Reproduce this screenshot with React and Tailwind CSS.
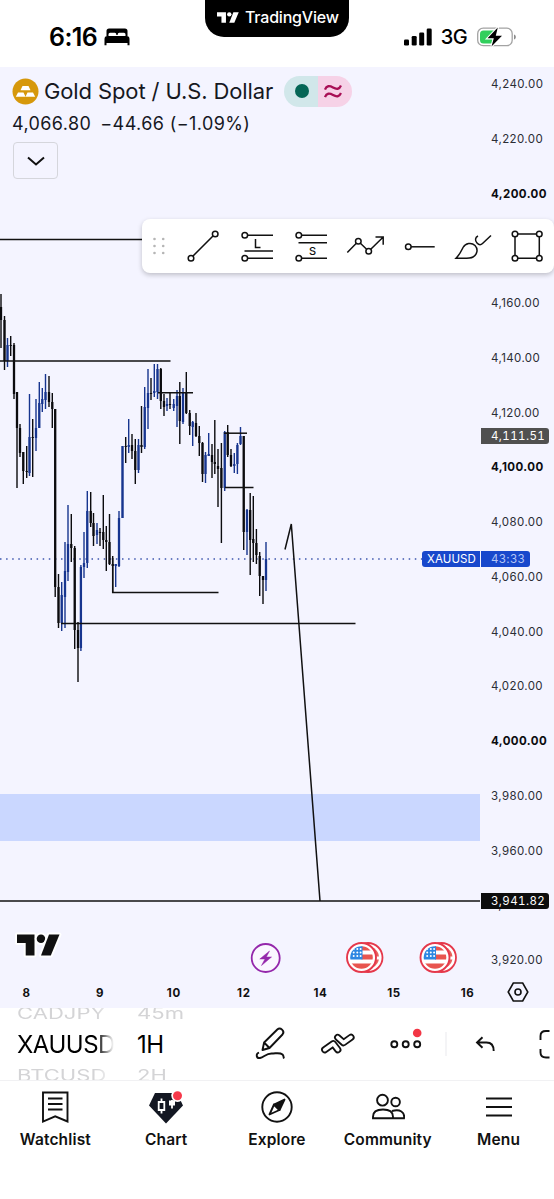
import React from "react";

const UP = "#17358f";
const DOWN = "#0b0b0e";

// [x, high, low, bodyTop, bodyBottom, isUp]
const candles = [
  [1, 294, 348, 307, 320, 0],
  [4.5, 316, 370, 320, 361, 0],
  [7.5, 338, 367, 345, 361, 1],
  [10.7, 336, 356, 345, 346, 0],
  [14, 343, 399, 345, 394, 0],
  [17, 392, 488, 392, 428, 0],
  [20, 424, 457, 428, 453, 0],
  [23.3, 452, 484, 452, 471, 0],
  [26.7, 446, 478, 471, 472, 0],
  [29.5, 394, 476, 437, 473, 1],
  [32.7, 419, 477, 437, 438, 0],
  [36, 399, 451, 428, 438, 1],
  [39.3, 382, 428, 403, 428, 1],
  [42.3, 388, 412, 399, 404, 1],
  [45.5, 374, 409, 392, 400, 1],
  [49, 376, 407, 392, 402, 0],
  [52.3, 393, 428, 402, 409, 0],
  [55.2, 409, 597, 409, 587, 0],
  [58.5, 574, 628, 587, 623, 0],
  [61.7, 582, 631, 595, 623, 1],
  [65, 542, 628, 571, 597, 1],
  [68, 505, 581, 544, 572, 1],
  [71.3, 514, 562, 544, 548, 0],
  [74.7, 546, 649, 548, 630, 0],
  [78, 622, 682, 630, 648, 0],
  [80.9, 565, 651, 567, 648, 1],
  [84, 532, 578, 563, 567, 1],
  [87.3, 491, 568, 511, 563, 1],
  [90.7, 492, 527, 511, 523, 0],
  [93.5, 513, 546, 523, 536, 0],
  [97, 523, 544, 530, 535, 1],
  [100, 528, 546, 532, 533, 0],
  [103.3, 495, 549, 532, 540, 0],
  [106.3, 526, 571, 540, 542, 0],
  [109.5, 514, 565, 542, 564, 0],
  [112.7, 556, 593, 564, 566, 0],
  [115.7, 564, 587, 564, 566, 1],
  [119, 511, 567, 518, 566, 1],
  [122.5, 446, 518, 446, 518, 1],
  [125.7, 437, 463, 446, 447, 0],
  [128.7, 419, 453, 445, 447, 1],
  [132, 434, 459, 445, 451, 0],
  [135.3, 439, 484, 451, 470, 0],
  [138.5, 439, 473, 445, 470, 1],
  [141.5, 406, 453, 445, 447, 0],
  [144.7, 387, 449, 407, 447, 1],
  [148, 369, 429, 393, 408, 1],
  [151, 378, 400, 393, 394, 0],
  [154.3, 364, 397, 391, 393, 1],
  [157.5, 364, 399, 369, 392, 1],
  [160.8, 368, 409, 369, 401, 0],
  [164, 394, 416, 401, 407, 0],
  [167, 398, 411, 404, 406, 1],
  [170, 393, 409, 404, 405, 0],
  [173.7, 399, 411, 404, 408, 1],
  [177, 390, 427, 396, 406, 1],
  [179.8, 382, 444, 396, 421, 0],
  [183, 388, 424, 392, 422, 1],
  [186.3, 372, 414, 393, 413, 0],
  [189.7, 410, 435, 413, 426, 0],
  [192.7, 421, 446, 422, 427, 1],
  [196, 413, 437, 423, 436, 0],
  [199.3, 426, 456, 436, 443, 0],
  [202.5, 442, 482, 443, 474, 0],
  [205.5, 452, 483, 455, 474, 1],
  [208.7, 433, 456, 454, 456, 1],
  [212, 444, 478, 455, 462, 0],
  [214.8, 420, 474, 462, 464, 0],
  [218, 449, 507, 466, 469, 0],
  [221.4, 443, 543, 468, 488, 0],
  [224.7, 431, 491, 432, 488, 1],
  [227.7, 425, 457, 432, 455, 0],
  [231, 449, 467, 455, 466, 0],
  [234.3, 453, 473, 464, 466, 1],
  [237.4, 443, 474, 445, 464, 1],
  [240.5, 427, 445, 436, 444, 1],
  [243.7, 436, 550, 436, 532, 0],
  [247, 509, 555, 510, 532, 1],
  [250.2, 493, 575, 510, 540, 0],
  [253.3, 496, 562, 539, 543, 0],
  [256.4, 529, 564, 543, 555, 0],
  [259.7, 552, 596, 556, 576, 0],
  [263, 576, 604, 576, 580, 0],
  [266, 542, 591, 559, 580, 1],
];

const levels = [
  [0, 239.5, 150],
  [0, 361, 170.5],
  [158, 392.8, 193],
  [224, 433.2, 247],
  [225, 487.5, 253.5],
  [112, 592.5, 218.5],
  [61, 623.5, 355.5],
  [0, 901, 480],
];

const prices = [
  "4,240.00", "4,220.00", "4,200.00", "4,180.00", "4,160.00", "4,140.00",
  "4,120.00", "4,100.00", "4,080.00", "4,060.00", "4,040.00", "4,020.00",
  "4,000.00", "3,980.00", "3,960.00", "3,940.00", "3,920.00",
];
const majorPrices = ["4,200.00", "4,100.00", "4,000.00"];

const days = [
  [26.5, "8"],
  [100, "9"],
  [173.8, "10"],
  [243.8, "12"],
  [320.5, "14"],
  [394, "15"],
  [467.5, "16"],
];

const TVLogo = ({ className }) => (
  <svg viewBox="0 0 43 21" className={className} fill="currentColor">
    <path d="M0 0h17.5v21H8.7V8.6H0z" />
    <circle cx="24" cy="4.3" r="4.3" />
    <path d="M32 0h10.5L33.8 21H24z" />
  </svg>
);

const StatusBar = () => (
  <header className="relative flex h-[67px] shrink-0 items-center justify-between bg-white pl-[49px] pr-[37px] pt-[7px] text-black">
    <div className="flex items-center gap-[7px]">
      <span className="text-[25px] font-semibold leading-none tracking-[-0.6px]">6:16</span>
      <svg width="26" height="18" viewBox="0 0 26 18">
        <path d="M2.5 8V3A2.6 2.6 0 0 1 5.100.4h15.800A2.600 2.600 0 0 1 23.500 3v5h-2V6.200A1.500 1.500 0 0 0 20 4.700h-4.800a1.500 1.500 0 0 0-1.500 1.500V7h-1.400v-.8a1.500 1.500 0 0 0-1.500-1.500H6a1.500 1.500 0 0 0-1.500 1.500V8z" />
        <path d="M3.500 8h19a3 3 0 0 1 3 3v6.200h-2V15h-21v2.200h-2V11a3 3 0 0 1 3-3z" />
      </svg>
    </div>
    <div className="flex items-center">
      <svg width="28" height="18" viewBox="0 0 28 18">
        <rect x="0" y="11.5" width="5" height="6" rx="1.3" />
        <rect x="7.7" y="8" width="5" height="9.5" rx="1.3" />
        <rect x="15.2" y="4.5" width="5" height="13" rx="1.3" />
        <rect x="22.7" y="0.5" width="5" height="17" rx="1.3" />
      </svg>
      <span className="ml-[9px] text-[20px] font-medium leading-none tracking-[-0.6px]">3G</span>
      <svg className="ml-[10px]" width="40" height="22" viewBox="0 0 40 22">
        <rect x="0.7" y="2.2" width="34.5" height="17.5" rx="5.5" fill="#fff" stroke="#a3a3a3" strokeWidth="1.3" />
        <path d="M6.5 4.5H17v13H6.500A3.500 3.500 0 0 1 3 14V8a3.500 3.500 0 0 1 3.500-3.500z" fill="#31cf5c" />
        <path d="M37 8.500c1.500.5 1.800 1.500 1.800 2.500s-.3 2-1.800 2.500z" fill="#8c8c8c" />
        <path d="M20.800 1.500 10.500 12.300h6.300l-2.300 8.200L25 9.700h-6.200z" stroke="#fff" strokeWidth="2.2" paintOrder="stroke" />
      </svg>
    </div>
    <div className="absolute left-[205px] top-0 flex h-[37px] w-[144px] items-center rounded-b-[19px] bg-black pb-[3px] pl-[12px] text-white">
      <TVLogo className="h-[11px] w-[22px]" />
      <span className="ml-[6px] text-[16px] font-medium leading-none tracking-[-0.2px]">TradingView</span>
    </div>
  </header>
);

const FlagBadge = ({ x }) => (
  <g transform={`translate(${x} 957.5)`}>
    <circle cx="6.5" r="14.5" fill="#fff" stroke="#e5384b" strokeWidth="1.8" />
    <circle cx="6.5" r="11" fill="#e8635d" />
    <path d="M12-1h6v3h-6z" fill="#fff" />
    <circle r="14.5" fill="#fff" stroke="#e5384b" strokeWidth="1.9" />
    <g clipPath="url(#flagClip)">
      <rect x="-12" y="-12" width="24" height="24" fill="#fff" />
      <path d="M0-12h12v5H0zM0-3h12v5H0zM-12 6h24v6h-24z" fill="#e8554f" />
      <rect x="-12" y="-12" width="13" height="14" fill="#2d87e2" />
      {[-8.5, -5, -1.5].map((y) =>
        [-7.8, -4.2, -0.9].map((sx) => (
          <circle key={`${sx}${y}`} cx={sx} cy={y} r="1" fill="#fff" />
        ))
      )}
    </g>
  </g>
);

const Chart = () => (
  <svg width="480" height="913" viewBox="0 67 480 913" className="shrink-0">
    <defs>
      <clipPath id="flagClip">
        <circle r="11.3" />
      </clipPath>
    </defs>

    {/* Demand zone */}
    <rect x="0" y="794" width="480" height="47" fill="#cad7ff" />

    {/* Current price */}
    <path d="M0 559H422" stroke="#3c55ad" strokeWidth="1.5" strokeDasharray="1.5 4.6" />

    {candles.map(([x, high, low, top, bottom, up]) => (
      <g key={x} fill={up ? UP : DOWN}>
        <rect x={x - 0.7} y={high} width="1.4" height={low - high} />
        <rect x={x - 1.15} y={top} width="2.3" height={bottom - top} />
      </g>
    ))}

    {/* Drawn levels */}
    {levels.map(([x1, y, x2]) => (
      <path key={y} d={`M${x1} ${y}H${x2}`} stroke="#111" strokeWidth="1.5" />
    ))}
    <path d="M112.7 558V593" stroke="#111" strokeWidth="1.5" />
    <path d="M285 549.5 291.3 524 320 901" fill="none" stroke="#111" strokeWidth="1.5" />

    <g transform="translate(17 934.5)" stroke="#fff" strokeWidth="4" strokeLinejoin="round" fill="#111" paintOrder="stroke">
      <path d="M0 0h17.5v21H8.700V8.600H0z" />
      <circle cx="24" cy="4.3" r="4.3" />
      <path d="M32 0h10.500L33.800 21H24z" />
    </g>

    {/* Events */}
    <circle cx="265.700" cy="958" r="14" fill="#faf7ff" stroke="#9427ab" strokeWidth="1.8" />
    <path d="M269.500 951l-9.700 8h5.200l-3.500 6.500 10-8.500h-5.200z" fill="#9427ab" stroke="#9427ab" strokeWidth="0.5" />
    <FlagBadge x={361.5} />
    <FlagBadge x={435} />
  </svg>
);

const Legend = () => (
  <div className="absolute left-[12px] top-[8px] text-[#16181f]">
    <div className="flex h-8 items-center">
      <svg width="27" height="27" viewBox="0 0 27 27">
        <circle cx="13.5" cy="13.5" r="13" fill="#d6980b" />
        <path d="M10.500 8h6l2 4.200h-10zM6 14.500h5.500l2 4.300H3.800zM15.500 14.500H21l2.200 4.300h-9.700z" fill="#fff" />
      </svg>
      <span className="ml-[5px] whitespace-nowrap text-[22px] leading-none tracking-[-0.12px]">Gold Spot / U.S. Dollar</span>
      <div className="ml-[11px] flex h-[31px] w-[68px] overflow-hidden rounded-full">
        <div className="flex w-1/2 items-center justify-center bg-[#d1e7ea]">
          <span className="ml-0.5 size-[14px] rounded-full bg-[#056656]" />
        </div>
        <div className="flex w-1/2 items-center justify-center bg-[#f6d2e7] pr-1">
          <svg width="18" height="15" viewBox="0 0 18 15" fill="none" stroke="#a80f55" strokeWidth="2.3">
            <path d="M1 5.500C2.500 1.500 5.500 1.500 9 3.500s6.500 2 8-2M1 13C2.500 9 5.500 9 9 11s6.500 2 8-2" />
          </svg>
        </div>
      </div>
    </div>
    <div className="mt-[7px] flex gap-[9px] whitespace-nowrap text-[18px] leading-5 tracking-[0.4px]">
      <span>4,066.80</span>
      <span>−44.66 (−1.09%)</span>
    </div>
    <button className="ml-[1px] mt-[8px] flex h-[37px] w-[45px] items-center justify-center rounded-[4px] border border-[#d5d6dc]">
      <svg width="18" height="10" viewBox="0 0 18 10" fill="none" stroke="#111" strokeWidth="2">
        <path d="m1 1.500 8 7 8-7" />
      </svg>
    </button>
  </div>
);

const Dot = ({ x, y }) => <circle cx={x} cy={y} r="2.8" fill="#fff" />;

const tools = [
  <>
    <path d="M6 30 30 6" />
    <Dot x="6" y="30.2" />
    <Dot x="30.2" y="6" />
  </>,
  <>
    <path d="M6 7.200H34M5.500 23H34M6 30.200H34M16.500 11v8.500h5" />
    <Dot x="5.8" y="7.2" />
    <Dot x="5.8" y="30.2" />
  </>,
  <>
    <path d="M6 7.200H34M5.500 14.700H34M6 30.200H34" />
    <Dot x="5.8" y="7.2" />
    <Dot x="5.8" y="30.2" />
    <text x="19.5" y="26.5" textAnchor="middle" className="fill-[#111] stroke-none text-[11px] font-medium">S</text>
  </>,
  <>
    <path d="M.3 24.500 11.300 13.200l10.400 10L36 9.200M28.500 9h7.700v7.700" />
    <Dot x="11.3" y="13.2" />
    <Dot x="21.7" y="23.2" />
  </>,
  <>
    <path d="M7 18.800H33.700" />
    <Dot x="7.3" y="18.8" />
  </>,
  <>
    <path d="M1 30.300C5 26 6.500 22.500 8 19.500c2.500-4.500 8.500-5.500 12-2 3.300 3.500 2.500 9-2 11.500-3.500 2-9 1.200-17 1.300z" />
    <path d="M23 8c-3 1.500-3.200 4.500-1 7s4 2 5.500.5L36 7.500" />
  </>,
  <>
    <path d="M6 6h24.300v24.200H6z" />
    <Dot x="6" y="6" />
    <Dot x="30.3" y="6" />
    <Dot x="6" y="30.2" />
    <Dot x="30.3" y="30.2" />
  </>,
];

const DrawingToolbar = () => (
  <div className="absolute left-[142px] top-[152px] flex h-[54px] w-[412px] items-center rounded-[8px] bg-white shadow-[0_2px_5px_rgba(0,0,0,0.22)]">
    <svg className="w-[34px] shrink-0" height="20" viewBox="0 0 34 20" fill="#b5b5b5">
      {[3, 10, 17].map((y) => (
        <g key={y}>
          <circle cx="12.5" cy={y} r="1.3" />
          <circle cx="21.2" cy={y} r="1.3" />
        </g>
      ))}
    </svg>
    {tools.map((tool, i) => (
      <div key={i} className="flex w-[54px] shrink-0 justify-center">
        <svg width="36" height="36" viewBox="0 0 36 36" fill="none" stroke="#111" strokeWidth="1.5" className="overflow-visible">
          {tool}
        </svg>
      </div>
    ))}
  </div>
);

const PriceScale = () => (
  <div className="flex flex-1 flex-col justify-between pb-[12px] pl-[11px] pt-[9px]">
    {prices.map((p) => (
      <span
        key={p}
        className={`h-4 text-[11.500px] leading-4 ${
          majorPrices.includes(p) ? "font-bold tracking-[0.4px] text-[#0b0c10]" : "tracking-[0.4px] text-[#2b2d35]"
        }`}
      >
        {p}
      </span>
    ))}
  </div>
);

const PriceTags = () => (
  <>
    <div className="absolute left-[481px] top-[361px] h-4 w-[68px] rounded-r-[3px] bg-[#505050] pl-[10px] text-[11.5px] leading-4 tracking-[0.4px] text-white tabular-nums">4,111.51</div>
    <div className="absolute left-[422px] top-[484px] flex h-4 gap-[1px] text-[11.5px] leading-4">
      <span className="w-[58px] rounded-l-[3px] bg-[#1848cc] pl-[5px] tracking-[0.1px] text-white">XAUUSD</span>
      <span className="w-[49px] rounded-r-[3px] bg-[#1848cc] pl-[10px] tracking-[0.4px] text-[#b5c6f5]">43:33</span>
    </div>
    <div className="absolute left-[481px] top-[826px] h-4 w-[68px] rounded-r-[3px] bg-[#0d0d0d] pl-[10px] text-[11.5px] leading-4 tracking-[0.4px] text-white tabular-nums">3,941.82</div>
  </>
);

const TimeScale = () => (
  <div className="flex h-7">
    <svg width="480" height="28" className="shrink-0">
      {days.map(([x, label]) => (
        <text key={label} x={x} y="17" textAnchor="middle" className="fill-[#111] text-[11.5px] font-bold tracking-[0.6px]">
          {label}
        </text>
      ))}
    </svg>
    <div className="flex flex-1 justify-center pt-0.5">
      <svg width="22" height="20" viewBox="0 0 22 20" fill="none" stroke="#111" strokeWidth="1.6" className="ml-px">
        <path d="M6.300 1h9.400l5.100 9-5.100 9H6.300l-5.100-9z" />
        <circle cx="11" cy="10" r="3" />
      </svg>
    </div>
  </div>
);

const intervals = { prev: "45m", current: "1H", next: "2H" };
const symbols = { prev: "CADJPY", current: "XAUUSD", next: "BTCUSD" };

const Wheel = ({ prev, current, next }) => (
  <>
    <div className="mt-[-3px] h-[18px] origin-left scale-x-105 scale-y-75 whitespace-nowrap text-[21px] leading-[18px] text-[#d4d4d6]">{prev}</div>
    <div className="mt-[9px] h-[26px] whitespace-nowrap text-[24px] leading-[26px] tracking-[-0.5px] text-black">{current}</div>
    <div className="mt-[9px] h-[18px] origin-left scale-x-105 scale-y-75 whitespace-nowrap text-[21px] leading-[18px] text-[#d4d4d6]">{next}</div>
  </>
);

const BottomBar = () => (
  <div className="flex h-[73px] shrink-0 overflow-hidden border-b border-[#f1f1f3] bg-white">
    <div className="flex h-full w-[247px] shrink-0 pl-[17px]">
      <div className="w-[97px] overflow-hidden [mask-image:linear-gradient(to_right,black_82%,transparent_100%)]">
        <Wheel {...symbols} />
      </div>
      <div className="ml-[23px]">
        <Wheel {...intervals} />
      </div>
    </div>
    <svg width="307" height="72" viewBox="247 1008 307 72" fill="none" stroke="#111" strokeWidth="1.9" className="shrink-0">
      {/* Pencil */}
      <path d="M262.500 1050l1.600-7.500 13.200-13c3-2.800 8 1.500 5.200 5l-13 13.500zM264.100 1042.500l5.400 5.500" strokeLinejoin="round" />
      <path d="M259 1052.500c-3.500 1.500-2.800 6 1 5.500 4-.8 6-4.500 11.500-4.500 5 0 8.500-1.200 11 1 1.300 1.300 1 3 1.500 4" />
      {/* Strategy */}
      <g strokeLinecap="round" strokeLinejoin="round">
        <path d="M324.700 1049.700l8.500-6 4.600 6" stroke="#111" strokeWidth="7.200" />
        <path d="M324.700 1049.700l8.500-6 4.600 6" stroke="#fff" strokeWidth="3.600" />
        <path d="M337.700 1037.500l5.800 5.200 7.500-5.400" stroke="#111" strokeWidth="7.200" />
        <path d="M337.700 1037.500l5.800 5.200 7.500-5.400" stroke="#fff" strokeWidth="3.600" />
      </g>
      {/* More */}
      <circle cx="394.300" cy="1044.300" r="3" />
      <circle cx="405.700" cy="1044.300" r="3" />
      <circle cx="417.200" cy="1044.300" r="3" />
      <circle cx="417.200" cy="1033" r="4.300" fill="#f23645" stroke="none" />
      <path d="M446 1032v24" stroke="#eeeef1" strokeWidth="1.300" />
      {/* Undo */}
      <path d="M482.500 1037.200l-5.500 5.300 5.500 5.300M477.500 1042.500h9c5 0 7.200 2.500 7.200 8.500" />
      {/* Fullscreen */}
      <path d="M549.500 1031H546c-3.500 0-5.500 2-5.500 5v4M540.500 1049v3.500c0 3 2 5 5.500 5h3.500" />
    </svg>
  </div>
);

const WatchlistIcon = () => (
  <svg width="28" height="34" viewBox="0 0 28 34" fill="none" stroke="#111" strokeWidth="1.9">
    <path d="M2 2.500h24.500V31.500L14.200 26.300 2 31.500zM7 8.500h14.500M7 14h14.500M7 19.500h14.500" />
  </svg>
);

const ChartIcon = () => (
  <svg width="36" height="34" viewBox="0 0 36 34">
    <path d="M7 3H29l6 12.500L18 33.500 1 15.500z" fill="#131722" />
    <path d="M13.500 8.500v3M13.500 20v3.500M10.700 12h5.600v8h-5.600z" fill="none" stroke="#fff" strokeWidth="1.8" />
    <path d="M24 10v8.500" stroke="#fff" strokeWidth="1.8" />
    <path d="M21 10.500h6v5h-6z" fill="#fff" />
    <circle cx="29.5" cy="5.800" r="6.200" fill="#fff" />
    <circle cx="29.5" cy="5.800" r="4.500" fill="#f7384a" />
  </svg>
);

const ExploreIcon = () => (
  <svg width="32" height="34" viewBox="0 0 32 34" fill="none" stroke="#111" strokeWidth="1.9" strokeLinejoin="round">
    <circle cx="16" cy="17" r="14.700" />
    <path d="M13 14.500 8.500 24.500l10-4.500z" />
    <path d="M23.500 9.500 13 14.500l5.500 5.500z" fill="#111" />
  </svg>
);

const CommunityIcon = () => (
  <svg width="34" height="34" viewBox="0 0 34 34" fill="none" stroke="#111" strokeWidth="1.9">
    <circle cx="11.5" cy="10.200" r="5.400" />
    <circle cx="24.600" cy="12" r="4.300" />
    <path d="M2 28.200v-1.500c0-4.800 4-7.200 10-7.200s10 2.400 10 7.200v1.500zM22 28.200h11c1-6.200-4-9.400-12-7.200" />
  </svg>
);

const MenuIcon = () => (
  <svg width="28" height="34" viewBox="0 0 28 34" stroke="#111" strokeWidth="1.9">
    <path d="M1 8.500h26M1 17h26M1 25.500h26" />
  </svg>
);

const navItems = [
  { label: "Watchlist", Icon: WatchlistIcon },
  { label: "Chart", Icon: ChartIcon },
  { label: "Explore", Icon: ExploreIcon },
  { label: "Community", Icon: CommunityIcon },
  { label: "Menu", Icon: MenuIcon },
];

const BottomNav = () => (
  <nav className="grid flex-1 grid-cols-5 bg-white pt-[9px]">
    {navItems.map(({ label, Icon }) => (
      <div key={label} className="flex flex-col items-center">
        <Icon />
        <span className="mt-[6px] text-[15.500px] font-semibold leading-5 tracking-[0.15px] text-[#111]">{label}</span>
      </div>
    ))}
  </nav>
);

const App = () => {
  return (
    <div className="flex h-[1199px] w-[554px] flex-col overflow-hidden bg-white font-['Inter',sans-serif]">
      <StatusBar />
      <main className="relative h-[941px] shrink-0 bg-[#f4f4ff]">
        <div className="flex h-[913px]">
          <Chart />
          <PriceScale />
        </div>
        <TimeScale />
        <PriceTags />
        <Legend />
        <DrawingToolbar />
      </main>
      <BottomBar />
      <BottomNav />
    </div>
  );
};

export default App;
